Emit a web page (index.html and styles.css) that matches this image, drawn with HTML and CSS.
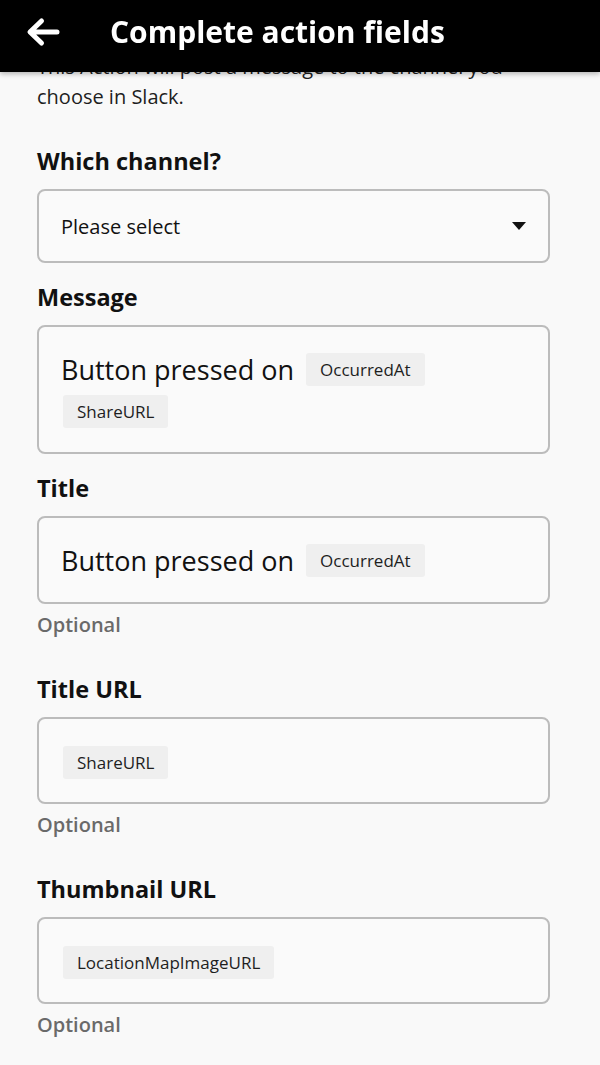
FILE: index.html
```html
<!DOCTYPE html>
<html lang="en">
<head>
<meta charset="utf-8">
<title>Complete action fields</title>
<link rel="stylesheet" href="styles.css">
</head>
<body>
<header class="topbar">
  <svg class="back" width="34" height="30" viewBox="0 0 34 30" aria-hidden="true">
    <path d="M31 15 H5 M15.5 4 L4 15 L15.5 26" fill="none" stroke="#fff" stroke-width="5" stroke-linecap="round" stroke-linejoin="round"/>
  </svg>
  <h1 class="title">Complete action fields</h1>
</header>

<main class="content">
  <p class="intro">This Action will post a message to the channel you choose in Slack.</p>

  <section class="field first">
    <h2 class="label">Which channel?</h2>
    <div class="select">
      <span class="select-text">Please select</span>
      <svg class="caret" width="14" height="8" viewBox="0 0 14 8" aria-hidden="true"><path d="M0 0 H14 L7 8 Z" fill="#111"/></svg>
    </div>
  </section>

  <section class="field">
    <h2 class="label">Message</h2>
    <div class="box"><span class="big">Button pressed on</span><span class="chip after-text">OccurredAt</span><span class="chip">ShareURL</span></div>
  </section>

  <section class="field">
    <h2 class="label">Title</h2>
    <div class="box"><span class="big">Button pressed on</span><span class="chip after-text">OccurredAt</span></div>
    <p class="hint">Optional</p>
  </section>

  <section class="field">
    <h2 class="label">Title URL</h2>
    <div class="box"><span class="chip">ShareURL</span></div>
    <p class="hint">Optional</p>
  </section>

  <section class="field">
    <h2 class="label">Thumbnail URL</h2>
    <div class="box"><span class="chip">LocationMapImageURL</span></div>
    <p class="hint">Optional</p>
  </section>
</main>
</body>
</html>
```

FILE: styles.css
```css
* {
  box-sizing: border-box;
}

html, body {
  margin: 0;
  padding: 0;
  background: #f9f9f9;
}

body {
  font-family: "Open Sans", "Noto Sans", sans-serif;
  color: #161616;
}

.topbar {
  position: fixed;
  top: 0;
  left: 0;
  right: 0;
  height: 72px;
  padding: 0 0 9px 26px;
  background: #000;
  display: flex;
  align-items: center;
  box-shadow: 0 2px 5px rgba(0, 0, 0, 0.28);
  z-index: 10;
}

.back {
  display: block;
  flex: none;
}

.title {
  margin: 0 0 0 50px;
  font-size: 30px;
  font-weight: 700;
  color: #fff;
  line-height: 36px;
}

.content {
  padding: 52px 50px 0 37px;
}

.intro {
  margin: 0;
  font-size: 20px;
  line-height: 30px;
  color: #1e1e1e;
}

.field {
  margin-top: 19px;
}

.field.first {
  margin-top: 34px;
}

.label {
  margin: 0 0 13px;
  font-size: 23.5px;
  line-height: 30px;
  font-weight: 700;
  color: #111;
}

.select {
  height: 74px;
  border: 2px solid #bcbcbc;
  border-radius: 8px;
  background: #fafafa;
  display: flex;
  align-items: center;
  justify-content: space-between;
  padding: 0 22px 0 22px;
}

.select-text {
  font-size: 20px;
  color: #111;
}

.caret {
  display: block;
}

.box {
  border: 2px solid #bcbcbc;
  border-radius: 8px;
  background: #fafafa;
  padding: 21px 30px 21px 22px;
  line-height: 41px;
  min-height: 87px;
}

.big {
  font-size: 27px;
  color: #111;
  vertical-align: middle;
}

.chip {
  display: inline-block;
  vertical-align: middle;
  background: #efefef;
  border-radius: 3px;
  padding: 0 14px;
  height: 33px;
  line-height: 33px;
  font-size: 17px;
  color: #1e1e1e;
  margin-left: 2px;
}

.chip.after-text {
  margin-left: 12px;
}

.hint {
  margin: 6px 0 34px;
  font-size: 20px;
  line-height: 30px;
  color: #6a6a6a;
  font-weight: 600;
}
```
